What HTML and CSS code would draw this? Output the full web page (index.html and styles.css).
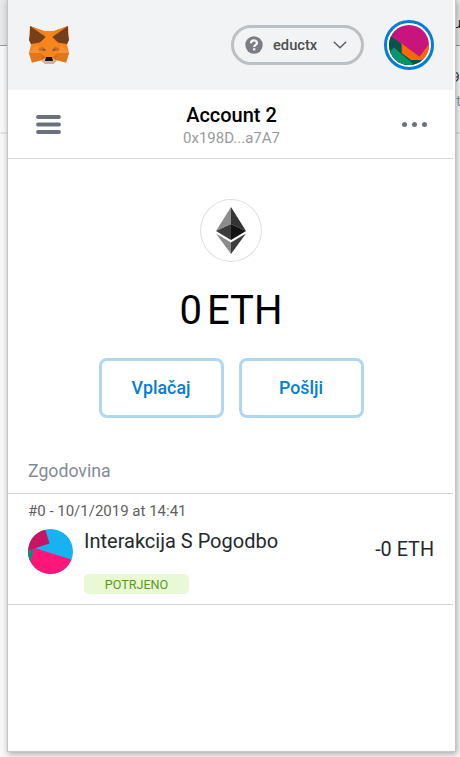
FILE: index.html
```html
<!DOCTYPE html>
<html lang="sl">
<head>
<meta charset="utf-8">
<title>Account 2</title>
<link rel="stylesheet" href="styles.css">
</head>
<body>
<div class="backdrop">
  <div class="backdrop-tabs"><span class="tab-text">ru</span></div>
  <div class="backdrop-tools"><span class="tool-number">9</span><span class="tool-text">st</span></div>
  <div class="backdrop-page"></div>
</div>
<main class="popup">
  <header class="app-header">
    <svg class="fox" viewBox="0 0 42 40" aria-hidden="true">
      <path fill="#c0ad9e" d="M12 34H30L25.500 39H17Z"/>
      <path fill="#f6851b" d="M2 1 16 6H26L40 1 41 14 39 20 41 28 38 37.500 28 35 25 36H17L14 35 4 37.500 1 28 3 20 1 14Z"/>
      <path fill="#e88325" d="M2 1 16 6 18 12 9 19 3 19ZM40 1 26 6 24 12 33 19 39 19Z"/>
      <path fill="#763e1a" d="M2 1 17.700 12 12 17.500 3 19 1 15 2 10ZM40 1 24.300 12 30 17.500 39 19 41 15 40 10Z"/>
      <path fill="#e2761b" d="M1 28H12L14 35 4 37.500ZM41 28H30L28 35 38 37.500Z"/>
      <path fill="#f89035" d="M1 28 9 20 12 28ZM41 28 33 20 30 28Z"/>
      <path fill="#d96a1b" d="M10 24 15 21.500 18 26 12 26ZM32 24 27 21.500 24 26 30 26ZM12 28 17 32 14 35ZM30 28 25 32 28 35Z"/>
      <path fill="#6b625b" d="M14 24 16.500 23.500 18 26 15.500 25.700ZM28 24 25.500 23.500 24 26 26.500 25.700Z"/>
      <path fill="#c9b3a6" d="M13 35.500 18 33H24L29 35.500 25.500 39H17Z"/>
      <path fill="#161616" d="M18 32H24L25 36H17Z"/>
    </svg>
    <div class="network">
      <svg class="help" viewBox="0 0 18 18" aria-hidden="true"><circle cx="9" cy="9" r="8.700" fill="#7b7d83"/><path d="M6 7.200C6 3.500 12 3.700 12 6.900 12 9 9.200 8.800 9.200 11" fill="none" stroke="#f2f3f4" stroke-width="2.300"/><rect x="8" y="12.200" width="2.400" height="2.200" fill="#f2f3f4"/></svg>
      <span class="network-name">eductx</span>
      <svg class="chevron" viewBox="0 0 14 8" aria-hidden="true"><path d="M.8.8 7 6.800 13.200.8" fill="none" stroke="#5b5d67" stroke-width="1.400"/></svg>
    </div>
    <div class="avatar">
      <svg viewBox="0 0 40 40" aria-hidden="true">
        <defs><clipPath id="round"><circle cx="20" cy="20" r="20"/></clipPath></defs>
        <g clip-path="url(#round)"><path fill="#c8147d" d="M0 0H40V40H0Z"/><path fill="#fa6900" d="M12 18 30.500 31.700 40 19V36H12Z"/><path fill="#03564c" d="M0 10 12.700 19V28L22 35H40V40H0Z"/><path fill="#03956f" d="M0 28 5 22.500 25 40H0Z"/></g>
      </svg>
    </div>
  </header>
  <section class="account-bar">
    <svg class="menu" viewBox="0 0 25 19" aria-hidden="true"><path d="M2 2H23M2 9.500H23M2 17H23" stroke="#6a737d" stroke-width="3.800" stroke-linecap="round"/></svg>
    <div class="account">
      <div class="account-name">Account 2</div>
      <div class="account-address">0x198D...a7A7</div>
    </div>
    <svg class="more" viewBox="0 0 25 5" aria-hidden="true"><g fill="#6a737d"><circle cx="2.500" cy="2.500" r="2.500"/><circle cx="12.500" cy="2.500" r="2.500"/><circle cx="22.500" cy="2.500" r="2.500"/></g></svg>
  </section>
  <section class="overview">
    <div class="token">
      <svg viewBox="0 0 30 47" aria-hidden="true"><path fill="#8c8c8c" d="M15 0V17L0 24Z"/><path fill="#343434" d="M15 0V17L30 24Z"/><path fill="#3c3c3b" d="M15 17V33L0 24Z"/><path fill="#141414" d="M15 17V33L30 24Z"/><path fill="#8c8c8c" d="M0 26.500 15 35.500V47Z"/><path fill="#3c3c3b" d="M30 26.500 15 35.500V47Z"/></svg>
    </div>
    <div class="balance">0 ETH</div>
    <div class="actions"><button class="action">Vplačaj</button><button class="action">Pošlji</button></div>
  </section>
  <h2 class="history-title">Zgodovina</h2>
  <article class="transaction">
    <div class="date">#0 - 10/1/2019 at 14:41</div>
    <div class="details">
      <svg class="identicon" viewBox="0 0 45 45" aria-hidden="true">
        <defs><clipPath id="tx-round"><circle cx="22.500" cy="22.500" r="22.500"/></clipPath></defs>
        <g clip-path="url(#tx-round)"><path fill="#18b2f2" d="M0 0H45V45H0Z"/><path fill="#ff1678" d="M5 18.500 45 31V45H0V20Z"/><path fill="#c81461" d="M0 0H17L21.500 14.500 0 21.500Z"/><path fill="#03907e" d="M0 21.500 5.500 20 2.500 34H0Z"/></g>
      </svg>
      <div class="description"><div class="action-name">Interakcija S Pogodbo</div><div class="status">POTRJENO</div></div>
      <div class="amount">-0 ETH</div>
    </div>
  </article>
</main>
</body>
</html>
```
FILE: styles.css
```css
* { box-sizing: border-box; }
body {
  margin: 0;
  height: 757px;
  overflow: hidden;
  position: relative;
  font-family: Roboto, sans-serif;
  background: #f8f8f8;
}
.backdrop { height: 757px; overflow: hidden; }
.backdrop-tabs {
  height: 46px;
  border-bottom: 1px solid #999;
  background: #e7e7e7;
  padding: 13px 0 0 446px;
}
.tab-text { font: 15px/18px "Open Sans", sans-serif; color: #222; }
.backdrop-tools {
  height: 88px;
  border-bottom: 2px solid #e3e4e5;
  padding: 20px 0 0 449px;
  display: flex;
  flex-direction: column;
}
.tool-number { font: 15px/20px "Open Sans", sans-serif; color: #333; padding-left: 2px; }
.tool-text { font: 14px/20px Roboto, sans-serif; color: #9299a8; margin-top: 5px; }
.popup {
  position: absolute;
  left: 8px;
  top: 0;
  width: 447px;
  height: 751px;
  padding-right: 2px;
  background: #fff;
  box-shadow: 0 0 0 1px #c5c5c5, 1px 2px 6px 1px rgba(0, 0, 0, .32);
}
.app-header {
  height: 90px;
  background: #f2f3f4;
  display: flex;
  align-items: center;
  padding: 0 19px 0 20px;
}
.fox { width: 42px; height: 40px; }
.network {
  width: 133px;
  height: 40px;
  margin-left: auto;
  border: 3px solid #bbc0c5;
  border-radius: 20px;
  display: flex;
  align-items: center;
  padding-left: 11px;
}
.help { width: 18px; height: 18px; }
.network-name {
  width: 47px;
  margin-left: 10px;
  margin-top: -1px;
  font-size: 14.700px;
  line-height: 20px;
  font-weight: 500;
  color: #4d4f53;
}
.chevron { width: 14px; height: 8px; margin-left: 13px; }
.avatar {
  width: 50px;
  height: 50px;
  margin-left: 20px;
  border: 3px solid #037dd6;
  border-radius: 50%;
  background: #fff;
  padding: 2px;
}
.avatar svg { display: block; width: 40px; height: 40px; }
.account-bar {
  height: 69px;
  border-bottom: 1px solid #d2d8dd;
  display: flex;
  align-items: center;
  justify-content: space-between;
  padding: 0 26px 0 28px;
}
.menu { width: 25px; height: 19px; }
.more { width: 25px; height: 5px; }
.account { text-align: center; padding-top: 4px; }
.account-name { font-size: 20px; line-height: 23px; font-weight: 500; color: #000; }
.account-address { font-size: 15px; line-height: 22px; color: #989a9b; }
.overview { display: flex; flex-direction: column; align-items: center; padding-top: 40px; }
.token {
  width: 62px;
  height: 63px;
  border: 1px solid #dedede;
  border-radius: 50%;
  display: flex;
  align-items: center;
  justify-content: center;
}
.token svg { width: 30px; height: 47px; }
.balance { margin: 25px 0 0 1px; height: 48px; font-size: 40px; line-height: 48px; color: #000; word-spacing: -5px; }
.actions { display: flex; gap: 15px; margin: 23px 0 0 1px; }
.action {
  width: 125px;
  height: 60px;
  border: 3px solid #b0d7f2;
  border-radius: 8px;
  background: #fff;
  color: #037dd6;
  font: 500 17.800px/20px Roboto, sans-serif;
  padding: 0;
}
.history-title {
  height: 76px;
  margin: 0;
  padding: 41px 20px 0;
  border-bottom: 1px solid #d2d4d6;
  color: #858b96;
  font-size: 17.700px;
  line-height: 24px;
  font-weight: 400;
}
.transaction { height: 111px; padding: 8px 19px 0 20px; border-bottom: 1px solid #d2d4d6; }
.date { font-size: 15px; line-height: 18px; color: #5e6064; }
.details { display: flex; align-items: flex-start; padding-top: 9px; }
.identicon { width: 45px; height: 45px; }
.description { margin-left: 11px; }
.action-name { font-size: 20px; line-height: 24px; color: #24292e; }
.status {
  width: 105px;
  height: 20px;
  margin-top: 21px;
  border-radius: 5px;
  background: #e9f9d6;
  color: #599a1c;
  font-size: 12.600px;
  line-height: 21px;
  text-align: center;
}
.amount { margin: 9px 0 0 auto; font-size: 19.800px; line-height: 24px; color: #24292e; }
```
